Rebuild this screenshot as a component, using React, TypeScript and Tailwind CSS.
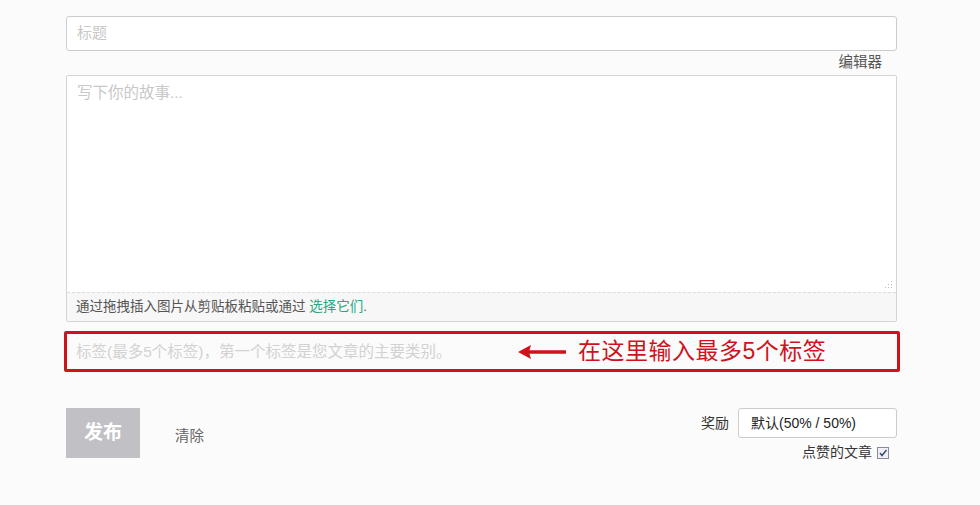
import React from "react";

export default function App() {
  return (
    <div className="w-[980px] h-[505px] bg-[#fbfbfb] font-['Liberation_Sans','Noto_Sans_CJK_SC',sans-serif] overflow-hidden">
      <div className="ml-[66px] w-[831px] pt-[16px]">
        {/* Title */}
        <div className="h-[35px] border border-[#cccccc] rounded-[3px] bg-white flex items-center px-[10px]">
          <span className="text-[15px] text-[#c8c8c8]">标题</span>
        </div>
        {/* editor label */}
        <div className="h-[24px] flex items-center justify-end pr-[15px]">
          <span className="text-[14.5px] text-[#555]">编辑器</span>
        </div>
        {/* Textarea */}
        <div className="h-[247px] border border-[#d4d4d4] rounded-[2px] bg-white flex flex-col">
          <div className="relative flex-1 px-[10px] pt-[5px]">
            <span className="text-[15.5px] text-[#c8c8c8]">写下你的故事...</span>
            <svg className="absolute right-[3px] bottom-[3px]" width="8" height="8" viewBox="0 0 8 8">
              <g fill="#bbb">
                <rect x="6" y="0" width="1" height="1" />
                <rect x="3" y="3" width="1" height="1" />
                <rect x="6" y="3" width="1" height="1" />
                <rect x="0" y="6" width="1" height="1" />
                <rect x="3" y="6" width="1" height="1" />
                <rect x="6" y="6" width="1" height="1" />
              </g>
            </svg>
          </div>
          <div className="h-[29px] border-t border-dashed border-[#dcdcdc] bg-[#f7f7f7] flex items-center px-[9px]">
            <span className="text-[13.5px] text-[#555]">
              通过拖拽插入图片从剪贴板粘贴或通过 <span className="text-[#26a882]">选择它们</span>.
            </span>
          </div>
        </div>
        {/* Tags with annotation */}
        <div className="mt-[9px] -ml-[2px] w-[836px] h-[41px] border-[3px] border-[#d0121b] rounded-[2px] flex items-center pl-[9px]">
          <span className="text-[15.5px] text-[#d2d2d2] w-[439px] whitespace-nowrap">标签(最多5个标签)，第一个标签是您文章的主要类别。</span>
          <svg width="50" height="16" viewBox="0 0 50 16" className="ml-[3px]">
            <path d="M10 8 H48" stroke="#d0121b" strokeWidth="3.5" />
            <path d="M0 8 L13 1 L11 8 L13 15 Z" fill="#d0121b" />
          </svg>
          <span className="ml-[10px] text-[23px] leading-none text-[#d0121b] tracking-[0.5px]">在这里输入最多5个标签</span>
        </div>
        {/* Bottom row */}
        <div className="mt-[36px] flex justify-between items-start">
          <div className="flex items-center">
            <div className="w-[74px] h-[50px] bg-[#c1c1c5] flex items-center justify-center">
              <span className="text-[19px] font-bold text-white">发布</span>
            </div>
            <span className="ml-[35px] mt-[8px] text-[14.5px] text-[#666]">清除</span>
          </div>
          <div className="flex flex-col items-end">
            <div className="flex items-center">
              <span className="text-[14px] text-[#333] mr-[9px]">奖励</span>
              <div className="w-[159px] h-[30px] border border-[#cccccc] rounded-[3px] bg-white flex items-center px-[12px]">
                <span className="text-[14px] text-[#222]">默认(50% / 50%)</span>
              </div>
            </div>
            <div className="flex items-center mt-[4px] pr-[8px]">
              <span className="text-[14px] text-[#333]">点赞的文章</span>
              <div className="ml-[5px] w-[12px] h-[12px] border border-[#8a8a9a] bg-[#eef0f6] flex items-center justify-center">
                <svg width="10" height="10" viewBox="0 0 10 10">
                  <path d="M2 5 L4 7.5 L8.5 2" stroke="#3b4a7a" strokeWidth="1.5" fill="none" />
                </svg>
              </div>
            </div>
          </div>
        </div>
      </div>
    </div>
  );
}
